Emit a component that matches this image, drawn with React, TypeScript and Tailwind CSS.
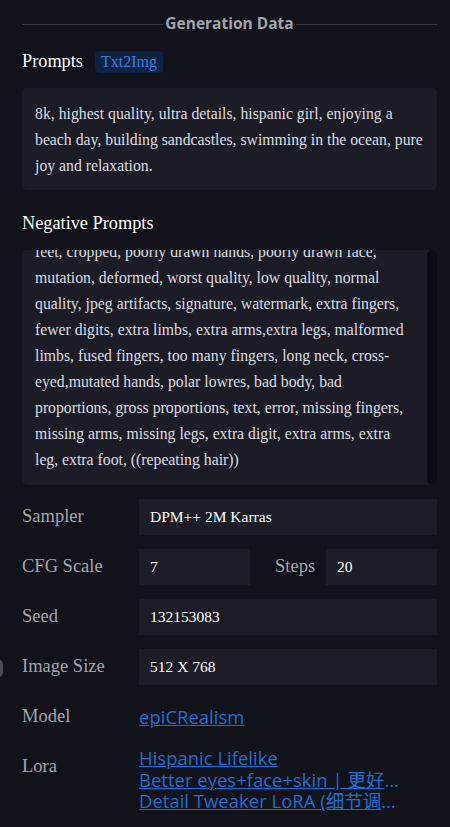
import React, { useEffect, useRef } from "react";

const serif = { fontFamily: '"Liberation Serif", "Noto Sans CJK SC", serif' };
const sans = { fontFamily: '"Open Sans", "Noto Sans CJK SC", sans-serif' };

const NEG =
  "(worst quality:2), (low quality:2), (normal quality:2), lowres, bad anatomy, bad hands, ((monochrome)), ((grayscale)), skin spots, acnes, skin blemishes, age spot, ugly, duplicate, morbid, mutilated, out of frame, extra limbs, disfigured, bad anatomy, bad hands, long body, bad feet, cropped, poorly drawn hands, poorly drawn face, mutation, deformed, worst quality, low quality, normal quality, jpeg artifacts, signature, watermark, extra fingers, fewer digits, extra limbs, extra arms,extra legs, malformed limbs, fused fingers, too many fingers, long neck, cross-eyed,mutated hands, polar lowres, bad body, bad proportions, gross proportions, text, error, missing fingers, missing arms, missing legs, extra digit, extra arms, extra leg, extra foot, ((repeating hair))";

function Row({ label, children }: { label: string; children: React.ReactNode }) {
  return (
    <div className="flex items-center h-[36px]">
      <div className="w-[117px] shrink-0 text-[18.5px] text-[#a3a5ab]" style={serif}>
        {label}
      </div>
      {children}
    </div>
  );
}

function ValueBox({ children, className = "" }: { children: React.ReactNode; className?: string }) {
  return (
    <div
      className={"h-[36px] flex items-center bg-[#1c1d27] pl-[11px] text-[15.5px] text-white " + className}
      style={serif}
    >
      {children}
    </div>
  );
}

export default function App() {
  const ref = useRef<HTMLDivElement>(null);
  useEffect(() => {
    if (ref.current) ref.current.scrollTop = ref.current.scrollHeight;
  }, []);
  return (
    <div className="relative min-h-[827px] w-[450px] overflow-hidden bg-[#11121a] pl-[22px] pr-[13px] pt-[13px]">
      <div className="absolute left-[-9px] top-[659px] h-[19px] w-[12px] rounded-full bg-[#4b4c51]" />
      <div className="flex items-center h-[22px]">
        <div className="h-[1px] flex-1 bg-[#373941]" />
        <span className="px-[2px] text-[15.5px] font-bold text-[#a2a4aa]" style={sans}>
          Generation Data
        </span>
        <div className="h-[1px] flex-1 bg-[#373941]" />
      </div>

      <div className="mt-[16px] flex items-center h-[22px]">
        <span className="text-[18.3px] text-white" style={serif}>
          Prompts
        </span>
        <span
          className="ml-[12px] h-[22px] flex items-center rounded-[4px] bg-[#0e2243] px-[6px] text-[16px] text-[#3b7be0]"
          style={serif}
        >
          Txt2Img
        </span>
      </div>

      <div
        className="mt-[15px] rounded-[5px] bg-[#1b1c26] pl-[13px] pr-[12px] pt-[13px] pb-[11px] text-[15.75px] leading-[26px] text-[#dcdde2]"
        style={serif}
      >
        8k, highest quality, ultra details, hispanic girl, enjoying a beach day, building sandcastles, swimming in the ocean, pure joy and relaxation.
      </div>

      <div className="mt-[22px] h-[24px] flex items-center text-[18.3px] text-white" style={serif}>
        Negative Prompts
      </div>

      <div className="mt-[14px] flex h-[235px] overflow-hidden rounded-[5px] bg-[#1b1c26]">
        <div
          ref={ref}
          className="h-full flex-1 overflow-y-scroll pl-[13px] pr-[15px] py-[12px] text-[15.75px] leading-[26px] text-[#dcdde2] [scrollbar-width:none] [&::-webkit-scrollbar]:hidden"
          style={serif}
        >
          {NEG}
        </div>
        <div className="h-full w-[10px] shrink-0 rounded-full bg-[#0c0d14]" />
      </div>

      <div className="mt-[14px] flex flex-col gap-[14px]">
        <Row label="Sampler">
          <ValueBox className="flex-1">DPM++ 2M Karras</ValueBox>
        </Row>
        <Row label="CFG Scale">
          <ValueBox className="w-[111px]">7</ValueBox>
          <div className="w-[76px] pl-[25px] text-[18.5px] text-[#a3a5ab]" style={serif}>
            Steps
          </div>
          <ValueBox className="flex-1">20</ValueBox>
        </Row>
        <Row label="Seed">
          <ValueBox className="flex-1">132153083</ValueBox>
        </Row>
        <Row label="Image Size">
          <ValueBox className="flex-1">512 X 768</ValueBox>
        </Row>
      </div>

      <div className="mt-[14px] flex items-center h-[36px]">
        <div className="w-[117px] shrink-0 text-[18.5px] text-[#a3a5ab]" style={serif}>
          Model
        </div>
        <a href="#" className="text-[18.5px] text-[#1b6fd1] underline" style={sans}>
          epiCRealism
        </a>
      </div>

      <div className="mt-[12px] flex items-start">
        <div className="w-[117px] shrink-0 pt-[6px] text-[18.5px] text-[#a3a5ab]" style={serif}>
          Lora
        </div>
        <div className="flex flex-col w-[262px] text-[18.5px] leading-[21.5px]" style={sans}>
          <a href="#" className="truncate text-[#1b6fd1] underline">
            Hispanic Lifelike
          </a>
          <a href="#" className="truncate text-[#1b6fd1] underline">
            Better eyes+face+skin | 更好的眼睛+脸+皮肤
          </a>
          <a href="#" className="truncate text-[#1b6fd1] underline">
            Detail Tweaker LoRA (细节调整LoRA)
          </a>
        </div>
      </div>
    </div>
  );
}
